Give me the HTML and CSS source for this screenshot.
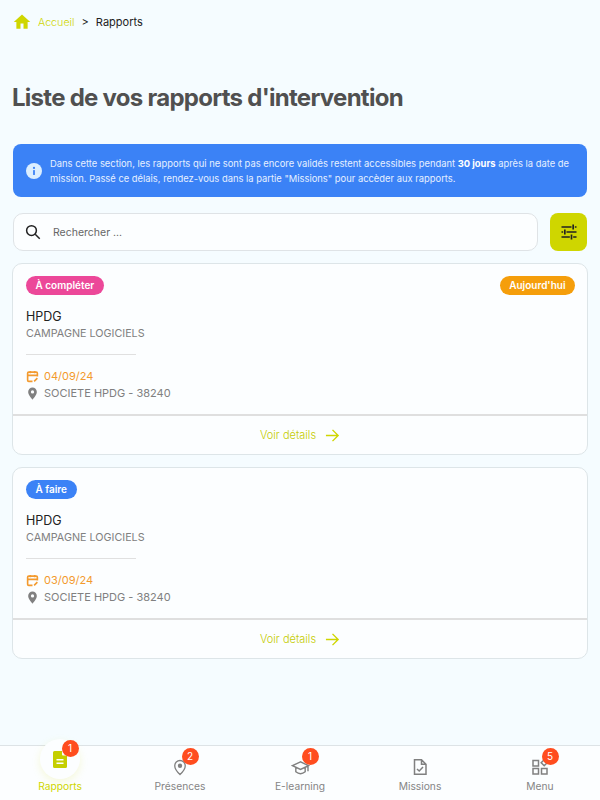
FILE: index.html
```html
<!DOCTYPE html>
<html lang="fr">
<head>
  <meta charset="UTF-8">
  <meta name="viewport" content="width=device-width, initial-scale=1.0">
  <title>Rapports</title>
  <link rel="stylesheet" href="styles.css">
</head>
<body>
  <main class="container">
    <nav class="breadcrumb">
      <svg class="home-icon" viewBox="0 0 24 24" width="18" height="18"><path d="M10 21v-7h4v7h5.500v-9H23L12 2 1 12h3.500v9z"/></svg>
      <a class="crumb-link">Accueil</a>
      <span class="crumb-sep">&gt;</span>
      <span class="crumb-current">Rapports</span>
    </nav>

    <h1 class="title">Liste de vos rapports d'intervention</h1>

    <div class="alert">
      <svg class="alert-icon" viewBox="0 0 16 16" width="16" height="16">
        <circle cx="8" cy="8" r="8" fill="#dbeeff"/>
        <rect x="7.100" y="7" width="1.800" height="5" rx=".5" fill="#3b82f6"/>
        <circle cx="8" cy="4.900" r="1.100" fill="#3b82f6"/>
      </svg>
      <p>Dans cette section, les rapports qui ne sont pas encore validés restent accessibles pendant <strong>30 jours</strong> après la date de mission. Passé ce délais, rendez-vous dans la partie "Missions" pour accèder aux rapports.</p>
    </div>

    <div class="search-row">
      <div class="search">
        <svg viewBox="0 0 24 24" width="18" height="18" fill="none" stroke="#222" stroke-width="2"><circle cx="10" cy="10" r="6.500"/><path d="M15 15l6 6"/></svg>
        <span>Rechercher ...</span>
      </div>
      <button class="filter-btn">
        <svg viewBox="0 0 24 24" width="20" height="20" fill="none" stroke="#222" stroke-width="2"><path d="M3 6h12M19 6h2M17 3v6M3 12h2M9 12h12M7 9v6M3 18h10M17 18h4M15 15v6"/></svg>
      </button>
    </div>

    <article class="card">
      <div class="card-body">
        <div class="badges">
          <span class="badge badge-pink">À compléter</span>
          <span class="badge badge-orange">Aujourd'hui</span>
        </div>
        <h2 class="client">HPDG</h2>
        <p class="campaign">CAMPAGNE LOGICIELS</p>
        <hr class="sep">
        <p class="line date">
          <svg viewBox="0 0 24 24" width="13" height="13" fill="none" stroke="#f39a2e" stroke-width="3"><path d="M12 21H5a2 2 0 0 1-2-2V6a2 2 0 0 1 2-2h14a2 2 0 0 1 2 2v6M3 10h18M8 2v4M16 2v4M15 21l6-6"/></svg>
          04/09/24
        </p>
        <p class="line place">
          <svg viewBox="0 0 24 24" width="13" height="13"><path fill="#808080" fill-rule="evenodd" d="M12 1a8 8 0 0 0-8 8c0 6 8 14 8 14s8-8 8-14a8 8 0 0 0-8-8zm0 5a3 3 0 1 1 0 6 3 3 0 0 1 0-6z"/></svg>
          SOCIETE HPDG - 38240
        </p>
      </div>
      <a class="card-footer">Voir détails
        <svg viewBox="0 0 16 16" width="15" height="15" fill="none" stroke="#cfd600" stroke-width="1.500"><path d="M1 8h13M8 2l6 6-6 6"/></svg>
      </a>
    </article>

    <article class="card">
      <div class="card-body">
        <div class="badges">
          <span class="badge badge-blue">À faire</span>
        </div>
        <h2 class="client">HPDG</h2>
        <p class="campaign">CAMPAGNE LOGICIELS</p>
        <hr class="sep">
        <p class="line date">
          <svg viewBox="0 0 24 24" width="13" height="13" fill="none" stroke="#f39a2e" stroke-width="3"><path d="M12 21H5a2 2 0 0 1-2-2V6a2 2 0 0 1 2-2h14a2 2 0 0 1 2 2v6M3 10h18M8 2v4M16 2v4M15 21l6-6"/></svg>
          03/09/24
        </p>
        <p class="line place">
          <svg viewBox="0 0 24 24" width="13" height="13"><path fill="#808080" fill-rule="evenodd" d="M12 1a8 8 0 0 0-8 8c0 6 8 14 8 14s8-8 8-14a8 8 0 0 0-8-8zm0 5a3 3 0 1 1 0 6 3 3 0 0 1 0-6z"/></svg>
          SOCIETE HPDG - 38240
        </p>
      </div>
      <a class="card-footer">Voir détails
        <svg viewBox="0 0 16 16" width="15" height="15" fill="none" stroke="#cfd600" stroke-width="1.500"><path d="M1 8h13M8 2l6 6-6 6"/></svg>
      </a>
    </article>
  </main>

  <nav class="tabbar">
    <a class="tab active">
      <span class="tab-icon">
        <svg viewBox="0 0 14 17" width="14" height="17"><path fill="#c5cf00" fill-rule="evenodd" d="M1.500 0H9v3.500a1 1 0 0 0 1 1h4v11a1.500 1.500 0 0 1-1.500 1.500h-11A1.500 1.500 0 0 1 0 15.500v-14A1.500 1.500 0 0 1 1.500 0zM3.500 8v1.500h7V8zm0 3.500V13h7v-1.500z"/></svg>
        <span class="count">1</span>
      </span>
      Rapports
    </a>
    <a class="tab">
      <span class="tab-icon">
        <svg viewBox="0 0 16 18" width="14" height="17"><path fill="none" stroke="#808080" stroke-width="1.500" d="M8 17S2 11.500 2 7a6 6 0 0 1 12 0c0 4.500-6 10-6 10z"/><circle cx="8" cy="7" r="2.500" fill="#808080"/></svg>
        <span class="count">2</span>
      </span>
      Présences
    </a>
    <a class="tab">
      <span class="tab-icon">
        <svg viewBox="0 0 20 16" width="19" height="15" fill="none" stroke="#808080" stroke-width="1.500"><path d="M10 2L1.500 6 10 10l8.500-4zM5 8v4.500c3 2.500 7 2.500 10 0V8M18 6v6"/></svg>
        <span class="count">1</span>
      </span>
      E-learning
    </a>
    <a class="tab">
      <span class="tab-icon">
        <svg viewBox="0 0 14 16" width="14" height="16" fill="none" stroke="#808080" stroke-width="1.500"><path d="M1.500.8h7l4.500 4.500v9.900H1.500zM8.500.8v4.500H13M4 10l2.200 2 3.800-4"/></svg>
      </span>
      Missions
    </a>
    <a class="tab">
      <span class="tab-icon">
        <svg viewBox="0 0 16 16" width="16" height="16" fill="none" stroke="#808080" stroke-width="1.500"><rect x="1" y="1.500" width="5.500" height="5.500"/><rect x="1" y="9.500" width="5.500" height="5.500"/><rect x="9.500" y="9.500" width="5.500" height="5.500"/><path d="M12.200.8l3 3-3 3-3-3z"/></svg>
        <span class="count">5</span>
      </span>
      Menu
    </a>
  </nav>
</body>
</html>
```

FILE: styles.css
```css
* {
  box-sizing: border-box;
}
html, body {
  height: 100%;
}
body {
  font-family: Inter, 'Noto Sans', sans-serif;
  margin: 0;
  background: #f5fcff;
  color: #222;
  display: flex;
  flex-direction: column;
  overflow: hidden;
}
.container {
  flex: 1;
  padding: 13px 12px 0 12px;
}
.breadcrumb {
  display: flex;
  align-items: center;
  font-size: 11px;
  height: 18px;
  padding-left: 1px;
}
.home-icon {
  fill: #cfd600;
  margin-right: 7px;
}
.crumb-link {
  color: #cfd600;
  font-size: 10.700px;
  font-weight: 300;
}
.crumb-sep {
  margin: 0 7px;
}
.title {
  font-size: 24px;
  font-weight: 700;
  letter-spacing: -0.73px;
  line-height: 30px;
  color: #505050;
  margin: 52px 0 31px 0;
}
.alert {
  display: flex;
  align-items: center;
  gap: 8px;
  height: 53px;
  background: #3b82f6;
  color: #e6f0ff;
  border-radius: 8px;
  padding: 0 13px;
  margin: 0 1px 16px 1px;
}
.alert-icon {
  flex: none;
}
.alert p {
  margin: 0;
  font-size: 9.400px;
  line-height: 15px;
}
.alert strong {
  color: white;
}
.search-row {
  display: flex;
  gap: 12px;
  margin-bottom: 12px;
  padding: 0 1px;
}
.search {
  flex: 1;
  height: 38px;
  display: flex;
  align-items: center;
  gap: 11px;
  background: #fcfeff;
  border: 1px solid #dfe3e6;
  border-radius: 10px;
  padding-left: 10px;
  font-size: 10.500px;
  color: #666;
}
.filter-btn {
  width: 37px;
  height: 38px;
  background: #cfd600;
  border: none;
  border-radius: 8px;
  padding: 0;
  display: flex;
  align-items: center;
  justify-content: center;
}
.card {
  background: #fcfeff;
  border: 1px solid #dde5e8;
  border-radius: 10px;
  margin: 0 0 12px 0;
  height: 192px;
}
.card-body {
  height: 152px;
  padding: 12px 12px 0 13px;
  border-bottom: 2px solid #dfdfdf;
}
.badges {
  display: flex;
  justify-content: space-between;
  height: 19px;
}
.badge {
  font-size: 10px;
  font-weight: 600;
  line-height: 19px;
  color: #fff;
  padding: 0 9.500px;
  border-radius: 10px;
}
.badge-pink {
  background: #ec4899;
}
.badge-orange {
  background: #f59e0b;
}
.badge-blue {
  background: #3b82f6;
}
.client {
  font-size: 12.500px;
  font-weight: 400;
  line-height: 16px;
  margin: 14px 0 0 0;
  color: #222;
}
.campaign {
  font-size: 10.750px;
  line-height: 14px;
  margin: 2px 0 0 0;
  color: #808080;
}
.sep {
  width: 110px;
  height: 1px;
  background: #e0e0e0;
  border: none;
  margin: 13px 0 14px 0;
}
.line {
  display: flex;
  align-items: center;
  gap: 5px;
  margin: 0 0 3px 0;
  height: 14px;
  font-size: 11px;
}
.date {
  color: #f39a2e;
}
.place {
  color: #808080;
}
.card-footer {
  height: 38px;
  display: flex;
  align-items: center;
  justify-content: center;
  gap: 9px;
  font-size: 11px;
  font-weight: 300;
  color: #c5cc00;
}
.tabbar {
  height: 55px;
  flex: none;
  display: flex;
  background: #fcfeff;
  border-top: 1px solid #dde3e6;
}
.tab {
  flex: 1;
  display: flex;
  flex-direction: column;
  align-items: center;
  padding-top: 11px;
  font-size: 10.250px;
  color: #858585;
  gap: 3px;
}
.tab.active {
  color: #cfd600;
}
.tab-icon {
  position: relative;
  height: 20px;
  display: flex;
  align-items: center;
  justify-content: center;
}
.tab.active .tab-icon {
  transform: translateY(-8px);
}
.tab.active .tab-icon::before {
  content: "";
  position: absolute;
  width: 40px;
  height: 40px;
  left: 50%;
  top: 50%;
  margin: -20px 0 0 -20px;
  border-radius: 50%;
  background: #fcfeff;
  box-shadow: 0 3px 8px rgba(207, 214, 0, 0.15);
}
.tab-icon svg {
  position: relative;
}
.count {
  position: absolute;
  left: calc(50% + 1.500px);
  top: -9px;
  width: 17px;
  height: 17px;
  border-radius: 50%;
  background: #ff4d1f;
  color: white;
  font-size: 10px;
  line-height: 17px;
  text-align: center;
}
```
